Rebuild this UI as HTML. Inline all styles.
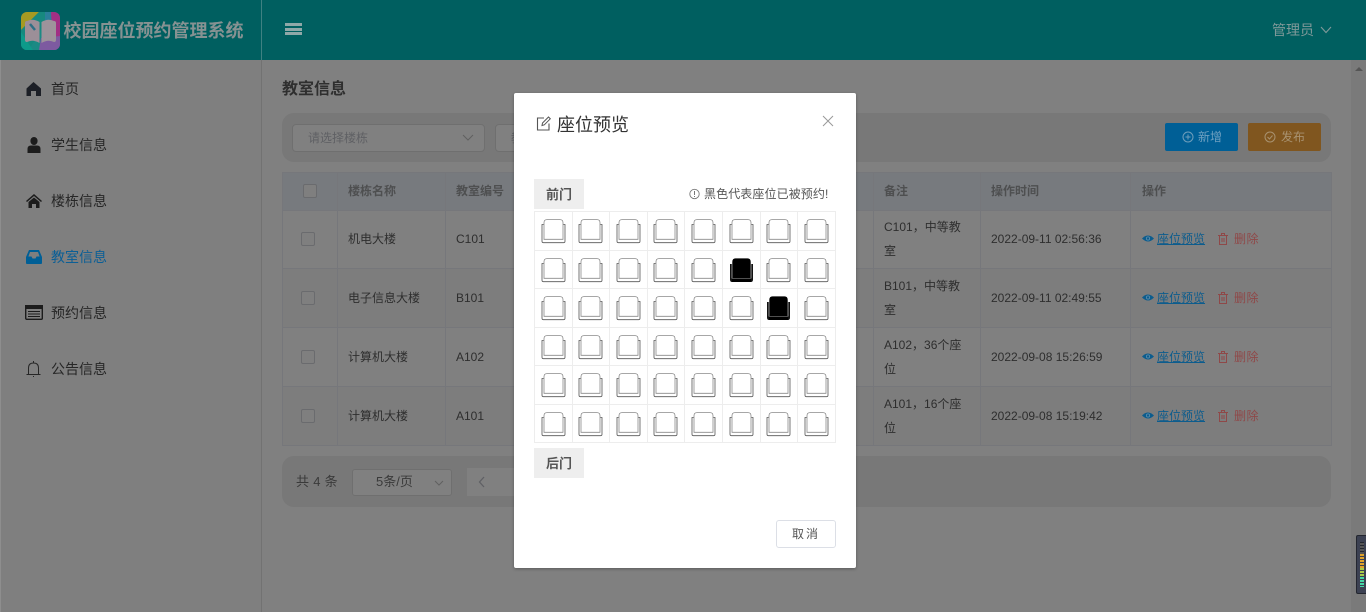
<!DOCTYPE html>
<html lang="zh"><head><meta charset="utf-8"><title>校园座位预约管理系统</title>
<style>
*{box-sizing:border-box}
html,body{margin:0;width:1366px;height:612px;overflow:hidden;background:#808080;font-family:"Liberation Sans","Noto Sans CJK SC",sans-serif;font-size:12px;color:#2e2e2e}
.a{position:absolute;white-space:nowrap}
.t{line-height:20px;height:20px}
.nav{left:51px;font-size:14px;color:#262626;line-height:20px}
.ico{position:absolute}
.hd{font-weight:bold;color:#4e4f50}
.cb{position:absolute;width:14px;height:14px;border:1px solid #6a6b6e;border-radius:2px;background:#7f7f7f}
.lnk{color:#0c5c8d;text-decoration:underline}
.del{color:#8f4848;letter-spacing:.5px}
.cell{position:absolute;border:1px solid #ededed;width:38.6px;height:39.5px}
.door{position:absolute;left:534px;width:50px;height:30px;background:#eee;color:#555;font-weight:bold;font-size:13px;line-height:32px;text-align:center}
.ln{position:absolute;background:#76777b}
</style></head><body>
<!-- backdrop page -->
<div class="a" style="left:0;top:0;width:1366px;height:60px;background:#005f60"></div>
<div class="a" style="left:261px;top:0;width:1px;height:60px;background:#3f8182"></div>
<div class="a" style="left:0;top:60px;width:1px;height:552px;background:#8e8e8e"></div>
<div class="a" style="left:1px;top:60px;width:260px;height:552px;background:#7f7f7f"></div>
<div class="a" style="left:261px;top:60px;width:1px;height:552px;background:#727272"></div>
<div class="a" style="left:1351px;top:60px;width:15px;height:552px;background:#7a7a7a"></div>

<svg class="ico" style="left:21px;top:12px" width="39" height="38" viewBox="0 0 39 38">
<defs><clipPath id="lc"><rect width="39" height="38" rx="6"/></clipPath></defs>
<g clip-path="url(#lc)">
<rect width="39" height="38" fill="#1b8a84"/>
<path d="M0 0H18L0 18Z" fill="#a59a22"/>
<path d="M18 0H30L8 38H0V18Z" fill="#16897f"/>
<path d="M24 0H32L36 38H24Z" fill="#2a7f9a"/>
<path d="M30 0H39V38H32Z" fill="#a22f84"/>
<path d="M20 26L39 24V38H18Z" fill="#7d5aa0"/>
<path d="M0 20L12 38H0Z" fill="#0d9a8a"/>
<path d="M6 9Q12 6 18.5 10V31Q12 27 6 30Q4 30 4 28V11Q4 9 6 9Z" fill="#9c8f98"/>
<path d="M33 9Q27 6 20.5 10V31Q27 27 33 30Q35 30 35 28V11Q35 9 33 9Z" fill="#9e939b"/>
<path d="M9 12L14 18" stroke="#2f6f85" stroke-width="2.5"/>
</g></svg>
<div class="a" style="left:63.5px;top:18px;font-size:18px;line-height:26px;font-weight:bold;color:#869292">校园座位预约管理系统</div>
<div class="a" style="left:285px;top:23px;width:17px;height:3px;background:#8fa8a8"></div>
<div class="a" style="left:285px;top:27.5px;width:17px;height:3px;background:#8fa8a8"></div>
<div class="a" style="left:285px;top:32px;width:17px;height:3px;background:#8fa8a8"></div>
<div class="a" style="left:1272px;top:20px;font-size:14px;line-height:20px;color:#7f9999">管理员</div>
<svg class="ico" style="left:1320px;top:26px" width="12" height="8" viewBox="0 0 12 8"><path d="M1 1L6 6.5L11 1" fill="none" stroke="#7f9999" stroke-width="1.1"/></svg>
<svg class="ico" style="left:1355px;top:66px" width="8" height="6"><path d="M0 5L4 1L8 5Z" fill="#555"/></svg>

<!-- sidebar -->
<svg class="ico" style="left:26px;top:82px" width="15" height="14" viewBox="0 0 15 14"><path d="M7.5 0L15 6.5V14H10V9H5V14H0.5V6.5Z" fill="#1c1f26"/></svg>
<div class="a nav" style="top:79px">首页</div>
<svg class="ico" style="left:27px;top:137px" width="14" height="16" viewBox="0 0 14 16"><ellipse cx="7" cy="4" rx="3.6" ry="4" fill="#1c1c1c"/><path d="M0.5 16V12Q0.5 8.5 4 8.5H10Q13.5 8.5 13.5 12V16Z" fill="#1c1c1c"/></svg>
<div class="a nav" style="top:135px">学生信息</div>
<svg class="ico" style="left:26px;top:194px" width="16" height="14" viewBox="0 0 16 14"><path d="M8 0L16 7L15 8L8 2L1 8L0 7Z" fill="#1c1c1c"/><path d="M2.5 8L8 3.5L13.5 8V14H10V10H6V14H2.5Z" fill="#1c1c1c"/></svg>
<div class="a nav" style="top:191px">楼栋信息</div>
<svg class="ico" style="left:26px;top:250px" width="16" height="14" viewBox="0 0 16 14"><path d="M3 0H13L16 7V13Q16 14 15 14H1Q0 14 0 13V7ZM4 2L2.4 6.5H5.5L6.5 8.5H9.5L10.5 6.5H13.6L12 2Z" fill="#005f96" fill-rule="evenodd"/></svg>
<div class="a nav" style="top:247px;color:#0b5f96">教室信息</div>
<svg class="ico" style="left:25px;top:305px" width="18" height="15" viewBox="0 0 18 15"><rect x=".7" y=".7" width="16.6" height="13.6" rx="1" fill="none" stroke="#1c1c1c" stroke-width="1.4"/><rect x="0" y="0" width="18" height="4" fill="#1c1c1c"/><path d="M3 6.5H15M3 9H15M3 11.5H15" stroke="#1c1c1c" stroke-width="1"/></svg>
<div class="a nav" style="top:303px">预约信息</div>
<svg class="ico" style="left:26px;top:361px" width="15" height="16" viewBox="0 0 15 16"><path d="M0.5 13.5H14.5M2.5 13V7Q2.5 2 7.5 2Q12.5 2 12.5 7V13M7.5 0V2M7 15.5H8" fill="none" stroke="#262626" stroke-width="1"/></svg>
<div class="a nav" style="top:359px">公告信息</div>

<!-- main -->
<div class="a" style="left:282px;top:76px;font-size:16px;line-height:24px;font-weight:bold;color:#2f2f2f;margin-top:2px">教室信息</div>
<div class="a" style="left:282px;top:113px;width:1049px;height:49px;background:#787878;border-radius:12px"></div>
<div class="a" style="left:292px;top:124px;width:193px;height:28px;background:#808080;border:1px solid #6f6f6f;border-radius:4px"></div>
<div class="a" style="left:308px;top:128px;line-height:20px;color:#5f6064">请选择楼栋</div>
<svg class="ico" style="left:462px;top:134px" width="12" height="8"><path d="M1 1L6 6L11 1" fill="none" stroke="#606060"/></svg>
<div class="a" style="left:495px;top:124px;width:40px;height:28px;background:#808080;border:1px solid #6f6f6f;border-radius:4px"></div>
<div class="a" style="left:511px;top:128px;line-height:20px;color:#5f6064">教室</div>
<div class="a" style="left:1165px;top:123px;width:73px;height:28px;background:#005f96;border-radius:2px"></div>
<svg class="ico" style="left:1182px;top:131px" width="12" height="12"><circle cx="6" cy="6" r="5" fill="none" stroke="#6f9ebb"/><path d="M3.5 6H8.5M6 3.5V8.5" stroke="#6f9ebb"/></svg>
<div class="a t" style="left:1198px;top:127px;color:#6fa0c0">新增</div>
<div class="a" style="left:1248px;top:123px;width:73px;height:28px;background:#80561f;border-radius:2px"></div>
<svg class="ico" style="left:1264px;top:131px" width="12" height="12"><circle cx="6" cy="6" r="5" fill="none" stroke="#a89270"/><path d="M3.5 6L5.5 8L8.5 4.5" fill="none" stroke="#a89270"/></svg>
<div class="a t" style="left:1281px;top:127px;color:#a89270">发布</div>

<!-- table -->
<div class="a" style="left:282px;top:172px;width:1049px;height:38px;background:#777a7e"></div>
<div class="a" style="left:282px;top:269px;width:1049px;height:59px;background:#7d7d7d"></div>
<div class="a" style="left:282px;top:387px;width:1049px;height:59px;background:#7d7d7d"></div>
<div class="ln" style="left:282px;top:172px;width:1049px;height:1px"></div>
<div class="ln" style="left:282px;top:210px;width:1049px;height:1px"></div>
<div class="ln" style="left:282px;top:268px;width:1049px;height:1px"></div>
<div class="ln" style="left:282px;top:327px;width:1049px;height:1px"></div>
<div class="ln" style="left:282px;top:386px;width:1049px;height:1px"></div>
<div class="ln" style="left:282px;top:445px;width:1049px;height:1px"></div>
<div class="ln" style="left:282px;top:172px;width:1px;height:274px"></div>
<div class="ln" style="left:337px;top:172px;width:1px;height:274px"></div>
<div class="ln" style="left:445px;top:172px;width:1px;height:274px"></div>
<div class="ln" style="left:873px;top:172px;width:1px;height:274px"></div>
<div class="ln" style="left:980px;top:172px;width:1px;height:274px"></div>
<div class="ln" style="left:1130px;top:172px;width:1px;height:274px"></div>
<div class="ln" style="left:1331px;top:172px;width:1px;height:274px"></div>

<div class="cb" style="left:303px;top:184px"></div>
<div class="a t hd" style="left:348px;top:181px">楼栋名称</div>
<div class="a t hd" style="left:456px;top:181px">教室编号</div>
<div class="a t hd" style="left:884px;top:181px">备注</div>
<div class="a t hd" style="left:991px;top:181px">操作时间</div>
<div class="a t hd" style="left:1142px;top:181px">操作</div>

<div class="cb" style="left:301px;top:232px"></div>
<div class="a t" style="left:348px;top:229px">机电大楼</div>
<div class="a t" style="left:456px;top:229px">C101</div>
<div class="a t" style="left:884px;top:217px">C101，中等教</div>
<div class="a t" style="left:884px;top:241px">室</div>
<div class="a t" style="left:991px;top:229px">2022-09-11 02:56:36</div>

<div class="cb" style="left:301px;top:291px"></div>
<div class="a t" style="left:348px;top:288px">电子信息大楼</div>
<div class="a t" style="left:456px;top:288px">B101</div>
<div class="a t" style="left:884px;top:276px">B101，中等教</div>
<div class="a t" style="left:884px;top:300px">室</div>
<div class="a t" style="left:991px;top:288px">2022-09-11 02:49:55</div>

<div class="cb" style="left:301px;top:350px"></div>
<div class="a t" style="left:348px;top:347px">计算机大楼</div>
<div class="a t" style="left:456px;top:347px">A102</div>
<div class="a t" style="left:884px;top:335px">A102，36个座</div>
<div class="a t" style="left:884px;top:359px">位</div>
<div class="a t" style="left:991px;top:347px">2022-09-08 15:26:59</div>

<div class="cb" style="left:301px;top:409px"></div>
<div class="a t" style="left:348px;top:406px">计算机大楼</div>
<div class="a t" style="left:456px;top:406px">A101</div>
<div class="a t" style="left:884px;top:394px">A101，16个座</div>
<div class="a t" style="left:884px;top:418px">位</div>
<div class="a t" style="left:991px;top:406px">2022-09-08 15:19:42</div>

<svg width="0" height="0" style="position:absolute"><defs>
<g id="eye"><path d="M0 4.5Q6 -1.5 12 4.5Q6 10.5 0 4.5Z" fill="#0c5c8d"/><circle cx="6" cy="4.5" r="2" fill="#5f8fae"/><circle cx="6" cy="4.5" r="1.2" fill="#0c5c8d"/></g>
<g id="tr"><path d="M0 2.5H10M3.5 2.5V.5H6.5V2.5M1.5 2.5V11.5H8.5V2.5M4 5V9M6 5V9" fill="none" stroke="#8f4848"/></g>
<g id="s"><path d="M2.8 5.5H1V22.2Q1 23.7 2.5 23.7H22.5Q24 23.7 24 22.2V5.5H22.2" fill="none" stroke="#555" stroke-width=".8"/><path d="M3 20.3V3.6Q3 .6 6 .6H19Q22 .6 22 3.6V20.3Z" fill="none" stroke="#8a8a8a" stroke-width=".8"/></g>
<g id="b"><path d="M2.5 6H1V21.5Q1 24 3 24H22Q24 24 24 21.5V6H22.5V20H2.5Z" fill="#111"/><path d="M3.3 20V4Q3.3 .4 6.5 .4H18.5Q21.7 .4 21.7 4V20Z" fill="#000"/><path d="M2.9 6V20.4H22.1V6" fill="none" stroke="#777" stroke-width=".6"/><path d="M3 21H22V24H3Z" fill="#000"/></g>
</defs></svg>

<svg class="ico" style="left:1142px;top:234px" width="12" height="10"><use href="#eye"/></svg>
<div class="a t lnk" style="left:1157px;top:229px">座位预览</div>
<svg class="ico" style="left:1218px;top:233px" width="10" height="12"><use href="#tr"/></svg>
<div class="a t del" style="left:1234px;top:229px">删除</div>
<svg class="ico" style="left:1142px;top:293px" width="12" height="10"><use href="#eye"/></svg>
<div class="a t lnk" style="left:1157px;top:288px">座位预览</div>
<svg class="ico" style="left:1218px;top:292px" width="10" height="12"><use href="#tr"/></svg>
<div class="a t del" style="left:1234px;top:288px">删除</div>
<svg class="ico" style="left:1142px;top:352px" width="12" height="10"><use href="#eye"/></svg>
<div class="a t lnk" style="left:1157px;top:347px">座位预览</div>
<svg class="ico" style="left:1218px;top:351px" width="10" height="12"><use href="#tr"/></svg>
<div class="a t del" style="left:1234px;top:347px">删除</div>
<svg class="ico" style="left:1142px;top:411px" width="12" height="10"><use href="#eye"/></svg>
<div class="a t lnk" style="left:1157px;top:406px">座位预览</div>
<svg class="ico" style="left:1218px;top:410px" width="10" height="12"><use href="#tr"/></svg>
<div class="a t del" style="left:1234px;top:406px">删除</div>

<!-- pagination -->
<div class="a" style="left:282px;top:456px;width:1049px;height:51px;background:#787878;border-radius:12px"></div>
<div class="a t" style="left:296px;top:472px;font-size:13px;letter-spacing:.3px;color:#3a3a3a">共 4 条</div>
<div class="a" style="left:352px;top:469px;width:100px;height:27px;background:#808080;border:1px solid #6f6f6f;border-radius:3px"></div>
<div class="a t" style="left:376px;top:472px;font-size:13px;color:#3a3a3a">5条/页</div>
<svg class="ico" style="left:434px;top:480px" width="10" height="7"><path d="M1 1L5 5L9 1" fill="none" stroke="#606060"/></svg>
<div class="a" style="left:467px;top:468px;width:47px;height:28px;background:#808080"></div>
<svg class="ico" style="left:478px;top:476px" width="8" height="12"><path d="M6 1L1.5 6L6 11" fill="none" stroke="#5f6064" stroke-width="1.3"/></svg>

<!-- volume widget -->
<div class="a" style="left:1356px;top:535px;width:10px;height:59px;background:#3c4152;border-radius:2px 0 0 2px;border:1px solid #23262f;border-right:0"></div>
<div class="a" style="left:1360px;top:542px;width:4px;height:12px;background:repeating-linear-gradient(#23262f 0 1px,#555 1px 3px)"></div>
<div class="a" style="left:1360px;top:554px;width:4px;height:14px;background:repeating-linear-gradient(#e0a22a 0 2px,#3c4152 2px 3px)"></div>
<div class="a" style="left:1360px;top:568px;width:4px;height:9px;background:repeating-linear-gradient(#a9c94a 0 2px,#3c4152 2px 3px)"></div>
<div class="a" style="left:1360px;top:577px;width:4px;height:10px;background:repeating-linear-gradient(#45d6a6 0 2px,#3c4152 2px 3px)"></div>

<!-- modal -->
<div class="a" style="left:514px;top:93px;width:342px;height:475px;background:#fff;border-radius:2px;box-shadow:0 1px 3px rgba(0,0,0,.3)"></div>
<svg class="ico" style="left:536px;top:116px" width="15" height="15" viewBox="0 0 15 15"><path d="M8 2H1.5V14H13V7.5" fill="none" stroke="#555" stroke-width="1.1"/><path d="M6 9.5L6.5 7L12.5 1L14.3 2.8L8.3 8.8Z" fill="none" stroke="#555" stroke-width="1"/></svg>
<div class="a" style="left:557px;top:113px;font-size:18px;line-height:24px;color:#333">座位预览</div>
<svg class="ico" style="left:822px;top:115px" width="12" height="12"><path d="M1 1L11 11M11 1L1 11" stroke="#999" stroke-width="1"/></svg>
<div class="door" style="top:179px">前门</div>
<svg class="ico" style="left:689px;top:188px" width="11" height="12" viewBox="0 0 11 12"><circle cx="5.5" cy="6" r="4.7" fill="none" stroke="#777" stroke-width=".9"/><path d="M5.5 3V7M5.5 8V9" stroke="#777"/></svg>
<div class="a" style="left:704px;top:184px;font-size:12px;line-height:20px;color:#555;letter-spacing:.1px">黑色代表座位已被预约!</div>

<div id="grid"><script>
var h='';
for(var r=0;r<6;r++)for(var c=0;c<8;c++){
 var x=534+c*37.6,y=211+r*38.5;
 h+='<div class="cell" style="left:'+x+'px;top:'+y+'px"></div>';
 var k=(r==1&&c==5)||(r==2&&c==6);
 h+='<svg class="ico" style="left:'+(x+6.5)+'px;top:'+(y+8)+'px" width="25" height="25" viewBox="0 0 25 25"><use href="#'+(k?'b':'s')+'"/></svg>';
}
document.write(h);
</script></div>

<div class="door" style="top:448px">后门</div>
<div class="a" style="left:776px;top:520px;width:60px;height:28px;border:1px solid #dcdfe6;border-radius:3px;background:#fff;text-align:center;line-height:26px;font-size:12px;color:#555;letter-spacing:2px">取消</div>
</body></html>
